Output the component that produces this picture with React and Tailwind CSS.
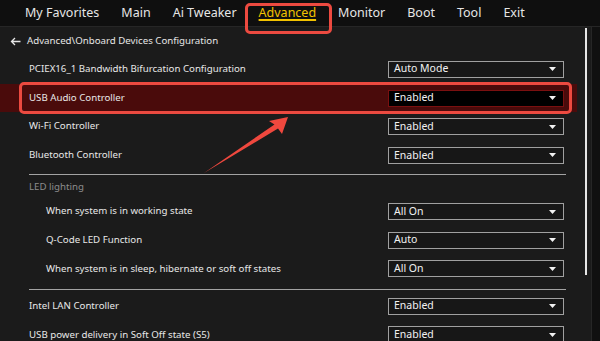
import React from "react";

const tabs = ["My Favorites", "Main", "Ai Tweaker", "Advanced", "Monitor", "Boot", "Tool", "Exit"];

function Dropdown({ value, active }) {
  return (
    <div
      className={
        "ml-auto flex h-[17px] w-[176px] items-center justify-between border pl-[5px] pr-[7px] text-[10.5px] text-[#f2f2f2] " +
        (active ? "border-[#7a1010] bg-black" : "border-[#a0a0a0] bg-[#171717]")
      }
    >
      <span>{value}</span>
      <svg width="7" height="4" viewBox="0 0 7 4">
        <path d="M0 0 H7 L3.5 4 Z" fill="#f2f2f2" />
      </svg>
    </div>
  );
}

function Row({ label, value, indent, active }) {
  return (
    <div
      className={
        "flex h-[28.7px] w-[577px] items-center pr-[13px] " +
        (indent ? "pl-[46px] " : "pl-[29px] ") +
        (active ? "bg-[#4a0b0b]" : "")
      }
    >
      <span className="text-[9.7px] text-[#e8e8e8]">{label}</span>
      <Dropdown value={value} active={active} />
    </div>
  );
}

function Separator() {
  return <div className="ml-[29px] h-[1.5px] w-[537px] bg-[#a3a3a3]" />;
}

export default function App() {
  return (
    <div
      className="relative h-[341px] w-[600px] overflow-hidden bg-[#1b1b1b]"
      style={{ fontFamily: '"Noto Sans", "Open Sans", sans-serif' }}
    >
      {/* Top menu */}
      <div className="flex h-[27px] items-center gap-[22px] border-b border-[#262626] bg-[#0f0f0f] pl-[25px]">
        {tabs.map((t) =>
          t === "Advanced" ? (
            <span key={t} className="text-[12.5px] text-[#f2c200] underline decoration-[1.5px] underline-offset-[2px]">
              {t}
            </span>
          ) : (
            <span key={t} className="text-[12.5px] text-[#e6e6e6]">
              {t}
            </span>
          )
        )}
      </div>

      <div className="flex">
        {/* Main column */}
        <div className="flex w-[585px] flex-col">
          <div className="flex h-[28px] items-center gap-[6px] pl-[10px] text-[9.7px] text-[#e6e6e6]">
            <svg width="11" height="9" viewBox="0 0 11 9">
              <path d="M10.5 4.5 H1.5 M5 1 L1.5 4.5 L5 8" stroke="#e6e6e6" strokeWidth="1.3" fill="none" />
            </svg>
            <span>Advanced\Onboard Devices Configuration</span>
          </div>

          <Row label="PCIEX16_1 Bandwidth Bifurcation Configuration" value="Auto Mode" />
          <Row label="USB Audio Controller" value="Enabled" active />
          <Row label="Wi-Fi Controller" value="Enabled" />
          <Row label="Bluetooth Controller" value="Enabled" />

          <div className="mt-[4px]">
            <Separator />
          </div>
          <div className="flex h-[22px] items-center pl-[29px] pt-[3px] text-[9.7px] text-[#8c8c8c]">LED lighting</div>

          <Row label="When system is in working state" value="All On" indent />
          <Row label="Q-Code LED Function" value="Auto" indent />
          <Row label="When system is in sleep, hibernate or soft off states" value="All On" indent />

          <div className="mb-[1.5px] mt-[5.5px]">
            <Separator />
          </div>

          <Row label="Intel LAN Controller" value="Enabled" />
          <Row label="USB power delivery in Soft Off state (S5)" value="Enabled" />
        </div>

        {/* Scrollbar */}
        <div className="w-[3px] pt-[1px]">
          <div className="h-[247px] w-[2px] bg-[#e6e6e6]" />
        </div>
        <div className="w-[3px]" />
        <div className="h-[314px] flex-1 border-l border-[#262626] bg-[#101010]" />
      </div>

      {/* Annotations */}
      <div className="absolute left-[245px] top-[3px] h-[31px] w-[87px] rounded-[5px] border-[3px] border-[#ec4a40]" />
      <div className="absolute left-[19px] top-[82px] h-[32px] w-[553px] rounded-[5px] border-[3px] border-[#ec4a40]" />
      <svg className="absolute left-0 top-0" width="600" height="341" viewBox="0 0 600 341">
        <polygon points="204,173 274.5,124.5 269,121 288,117 282,134 278,128.5" fill="#ef483e" />
      </svg>
    </div>
  );
}
